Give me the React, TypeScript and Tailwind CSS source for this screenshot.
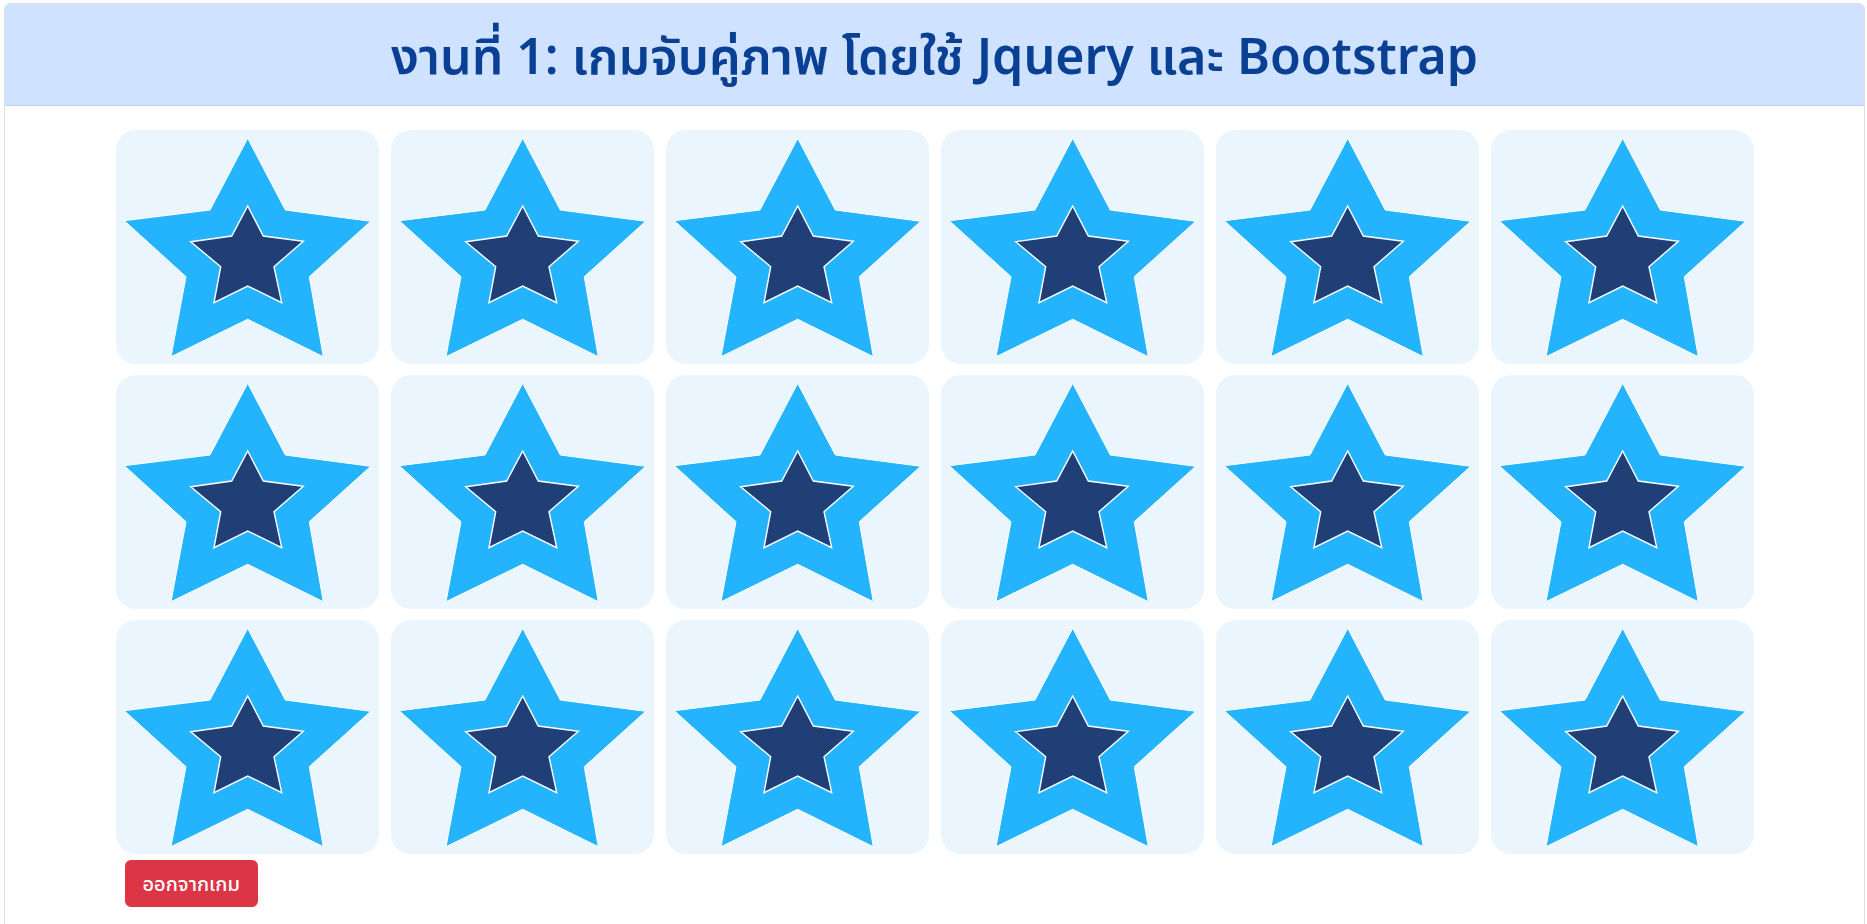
import React from 'react';

const OUTER = '123.7,0.3 161.3,72 246.7,83.3 185.3,138.7 199.3,218.7 123.7,181.3 47,218.7 62,138.7 0.3,82.7 86,72';
const INNER = '123.7,68 139.3,98 179.3,103.3 150,128.7 157.7,164.7 123.7,148 90,164.7 96.7,128.7 66.7,103.7 107.7,98';

function StarCard() {
  return (
    <div className="h-[234px] rounded-[20px] bg-[#eaf5fe] flex items-start justify-center pt-2 cursor-pointer">
      <svg width="247" height="219" viewBox="0 0 247 219">
        <polygon points={OUTER} fill="#23b4fd" stroke="#ffffff" strokeWidth="1" strokeLinejoin="miter" />
        <polygon points={INNER} fill="#213f77" stroke="#ffffff" strokeWidth="1.4" strokeLinejoin="miter" />
      </svg>
    </div>
  );
}

export default function App() {
  const cards = Array.from({ length: 18 });

  return (
    <div className="min-h-screen bg-white pl-1 pr-[2px] pt-[3px] overflow-hidden" style={{ fontFamily: '"Noto Sans", "Noto Sans Thai", "Open Sans", sans-serif' }}>
      <div className="min-h-[960px] border border-[#dcdee1] rounded-md bg-white overflow-hidden">
        {/* Header */}
        <div className="h-[102px] bg-[#cfe2ff] border-b border-[#b6d4fe] flex items-center justify-center">
          <h1 className="text-[50px] font-semibold text-[#0a4093] leading-none">
            งานที่ 1: เกมจับคู่ภาพ โดยใช้ Jquery และ Bootstrap
          </h1>
        </div>

        {/* Board */}
        <div className="w-[1638px] mx-auto pt-[24px]">
          <div className="grid grid-cols-6 gap-x-[12px] gap-y-[11px]">
            {cards.map((_, i) => (
              <StarCard key={i} />
            ))}
          </div>
          <button className="mt-[6px] ml-[9px] h-[47px] px-[18px] rounded-md bg-[#dc3545] text-white text-[20px] font-medium">
            ออกจากเกม
          </button>
        </div>
      </div>
    </div>
  );
}
